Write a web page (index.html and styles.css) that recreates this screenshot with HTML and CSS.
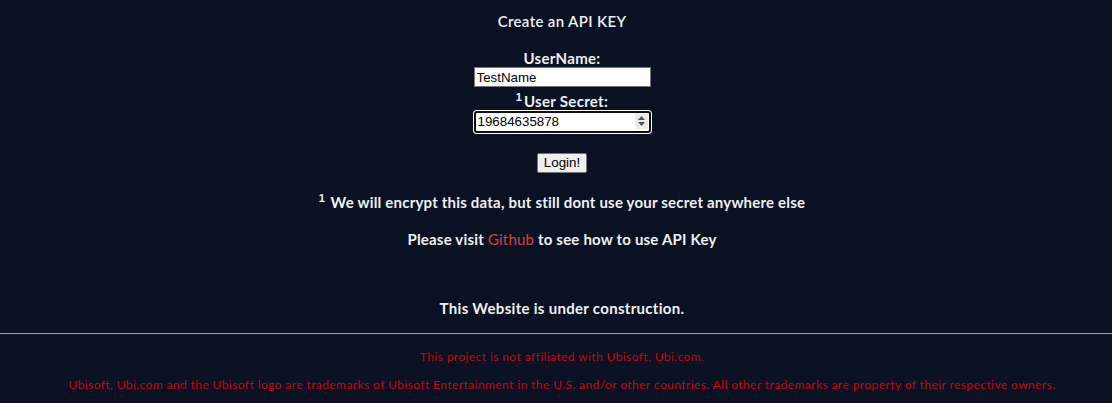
FILE: index.html
```html
<!DOCTYPE html>
<html>
<head>
<meta charset="utf-8">
<link rel="stylesheet" href="styles.css">
</head>
<body>
<main class="main">
  <h3 class="title">Create an API KEY</h3>
  <form class="form">
    <label class="label" for="user">UserName:</label>
    <input class="text-input" id="user" type="text" value="TestName">
    <label class="label label-secret" for="secret"><sup class="sup">1</sup>User Secret:</label>
    <div class="num-wrap">
      <input class="text-input num-input" id="secret" type="text" value="19684635878">
      <span class="spin"><svg width="9" height="12" viewBox="0 0 9 12"><path d="M4.5 1 L8 5 L1 5 Z" fill="#505050"/><path d="M4.5 11 L8 7 L1 7 Z" fill="#505050"/></svg></span>
    </div>
    <button class="btn" type="button">Login!</button>
  </form>
  <p class="note"><sup class="sup">1</sup> We will encrypt this data, but still dont use your secret anywhere else</p>
  <p class="note">Please visit <a class="link" href="#">Github</a> to see how to use API Key</p>
  <p class="construction">This Website is under construction.</p>
</main>
<hr class="rule">
<footer class="footer">
  <p class="foot-line">This project is not affiliated with Ubisoft, Ubi.com.</p>
  <p class="foot-line">Ubisoft, Ubi.com and the Ubisoft logo are trademarks of Ubisoft Entertainment in the U.S. and/or other countries. All other trademarks are property of their respective owners.</p>
</footer>
</body>
</html>
```
FILE: styles.css
```css
html, body {
  margin: 0;
  padding: 0;
}
body {
  background: #0a1122;
  color: #eef0f4;
  font-family: "Lato", "Noto Sans", sans-serif;
  height: 403px;
  overflow: hidden;
}
.main {
  display: flex;
  flex-direction: column;
  align-items: center;
  padding-top: 12px;
  padding-left: 12px;
}
.title {
  margin: 0;
  font-size: 15px;
  font-weight: 600;
  line-height: 18px;
  letter-spacing: 0.35px;
}
.form {
  display: flex;
  flex-direction: column;
  align-items: center;
  margin-top: 19px;
}
.label {
  font-size: 15px;
  font-weight: 700;
  line-height: 18px;
  letter-spacing: 0.3px;
}
.label-secret {
  margin-top: 1px;
}
.sup {
  font-size: 11px;
  vertical-align: 6px;
  line-height: 0;
  font-family: "Liberation Sans", Arial, sans-serif;
  margin-right: 2px;
  letter-spacing: 0;
}
.text-input {
  width: 177px;
  height: 20px;
  box-sizing: border-box;
  border: 1px solid #767676;
  background: #fff;
  color: #000;
  font-family: "Liberation Sans", Arial, sans-serif;
  font-size: 13.33px;
  padding: 1px 2px;
  margin: 0 0 4px 0;
  outline: none;
}
.num-wrap {
  position: relative;
  width: 177px;
  height: 22px;
}
.num-input {
  height: 22px;
  border: 2px solid #101010;
  border-radius: 3px;
  box-shadow: 0 0 0 1px #fff;
  padding: 0 2px;
}
.spin {
  position: absolute;
  right: 3px;
  top: 3px;
  width: 13px;
  height: 16px;
  background: #ebebeb;
  display: flex;
  align-items: center;
  justify-content: center;
}
.spin svg {
  display: block;
}
.btn {
  margin-top: 21px;
  height: 20px;
  padding: 1px 6px;
  font-family: "Liberation Sans", Arial, sans-serif;
  font-size: 13.33px;
  color: #000;
  background: #efefef;
  border: 1px solid #767676;
  border-radius: 2px;
  line-height: 14px;
}
.note {
  margin: 20px 0 0 0;
  font-size: 15px;
  font-weight: 700;
  line-height: 18px;
  letter-spacing: 0.2px;
}
.note + .note {
  margin-top: 19px;
}
.link {
  color: #d6404a;
  text-decoration: none;
  font-weight: 400;
}
.construction {
  margin: 51px 0 0 0;
  font-size: 15px;
  font-weight: 700;
  line-height: 18px;
  letter-spacing: 0.3px;
}
.rule {
  margin: 16px 0 0 0;
  border: none;
  border-top: 1px solid #62b4bf;
  height: 0;
}
.footer {
  display: flex;
  flex-direction: column;
  align-items: center;
  color: #cc0010;
  font-size: 12px;
  line-height: 14px;
  padding-top: 16px;
  padding-left: 12px;
  letter-spacing: 0.41px;
}
.foot-line {
  margin: 0;
}
.foot-line + .foot-line {
  margin-top: 14px;
}
```
